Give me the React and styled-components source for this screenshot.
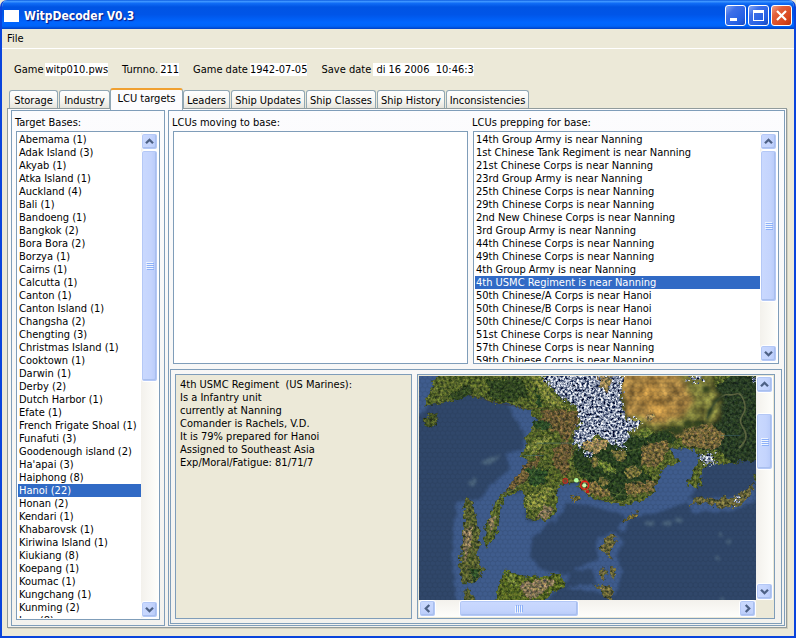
import React, { useState } from 'react';
import styled, { createGlobalStyle, css } from 'styled-components';

const GlobalStyle = createGlobalStyle`
  * { box-sizing: border-box; }
  body {
    margin: 0;
    background: #ece9d8;
    color: #000;
    font: 11px/13px "DejaVu Sans Condensed", Tahoma, sans-serif;
  }
  button, input { font: inherit; color: inherit; }
  button { padding: 0; cursor: default; }
`;

const line = '#7f9db9';

const Window = styled.div`
  height: 100vh;
  display: flex;
  flex-direction: column;
  background: #ece9d8;
  border: solid #0a44dc;
  border-width: 0 2px 2px;
  border-radius: 7px 7px 0 0;
  overflow: hidden;
`;

const TitleBar = styled.header`
  flex: none;
  height: 29px;
  display: flex;
  align-items: center;
  gap: 5px;
  padding: 2px 2px 0;
  background: linear-gradient(#0b5be0 0, #3d95ff 5%, #0f6bf5 12%, #0054e3 24%, #0055e8 50%, #0066ff 78%, #0064f8 90%, #0040c4 100%);
`;

const AppIcon = styled.span`
  width: 15px;
  height: 12px;
  background: #fff;
`;

const Title = styled.h1`
  flex: 1;
  margin: 0;
  color: #fff;
  font-size: 12px;
  line-height: 16px;
  text-shadow: 1px 1px 1px #0a1883;
`;

const CaptionButtons = styled.div`
  display: flex;
  gap: 2px;
`;

const CaptionButton = styled.button`
  display: grid;
  place-items: center;
  width: 21px;
  height: 21px;
  border: 1px solid #fff;
  border-radius: 3px;
  background: ${(p) => (p.$close
    ? 'linear-gradient(135deg, #f0a08a 0, #e2603c 30%, #d8451c 75%, #b83210 100%)'
    : 'linear-gradient(135deg, #86a8f4 0, #3e6fe8 30%, #2460e4 75%, #1a48b8 100%)')};
`;

const MenuBar = styled.nav`
  flex: none;
  height: 20px;
  display: flex;
  align-items: center;
  padding: 0 5px;
  border-bottom: 1px solid #fff;
`;

const MenuItem = styled.button`
  border: 0;
  background: none;
`;

const InfoBar = styled.section`
  flex: none;
  display: flex;
  gap: 14px;
  padding: 14px 12px 12px;
`;

const Field = styled.label`
  display: flex;
  gap: 2px;
  white-space: pre;
`;

const FieldValue = styled.input`
  field-sizing: content;
  height: 13px;
  padding: 0;
  border: 0;
  outline: 0;
  background: #fff;
`;

const Tabs = styled.div`
  flex: none;
  height: 20px;
  display: flex;
  align-items: flex-end;
  padding-left: 7px;
`;

const Tab = styled.button`
  width: ${(p) => p.$width}px;
  height: 18px;
  margin-right: 1px;
  padding-top: 2px;
  border: 1px solid #91a7b4;
  border-bottom: 0;
  border-radius: 3px 3px 0 0;
  background: linear-gradient(#fff, #f6f5f0 60%, #e6e4dc);
  white-space: nowrap;
  ${(p) => p.$active && css`
    height: 22px;
    margin: 0 0 -2px -1px;
    padding: 0 0 4px;
    border-top: 2px solid #f0a030;
    background: #fcfcfe;
    z-index: 1;
  `}
`;

const TabPanel = styled.main`
  flex: 1;
  min-height: 0;
  display: flex;
  gap: 3px;
  margin: 0 7px 8px 5px;
  padding: 1px 1px 1px 3px;
  border: 1px solid #919b9c;
  box-shadow: 1px 1px 0 #d3cfbf;
  background: linear-gradient(#fcfcfe, #f3f2ee);
`;

const BasesPane = styled.section`
  flex: none;
  width: 154px;
  display: flex;
  flex-direction: column;
  padding: 5px 4px;
  border: 1px solid ${line};
`;

const UnitsPane = styled.section`
  flex: 1;
  min-width: 0;
  display: grid;
  grid-template-rows: minmax(0, 250fr) minmax(0, 258fr);
  gap: 5px;
  padding: 5px 2px 1px 1px;
  border: 1px solid ${line};
`;

const UnitLists = styled.div`
  display: grid;
  grid-template-columns: minmax(0, 295fr) minmax(0, 306fr);
  gap: 5px;
  padding: 0 3px 0 3px;
`;

const ListColumn = styled.div`
  display: flex;
  flex-direction: column;
  min-height: 0;
`;

const ListTitle = styled.h2`
  flex: none;
  margin: 0 -1px 2px;
  font-size: 11px;
  line-height: 13px;
  font-weight: 400;
`;

const ListBox = styled.div`
  flex: 1;
  min-height: 0;
  display: flex;
  padding: 1px;
  border: 1px solid ${line};
  background: #fff;
`;

const Items = styled.ul`
  flex: 1;
  min-width: 0;
  margin: 0;
  padding: 0;
  list-style: none;
  overflow: hidden;
`;

const Item = styled.li`
  height: 13px;
  padding-left: 1px;
  white-space: nowrap;
  ${(p) => p.$selected && css`
    background: #316ac5;
    color: #fff;
  `}
`;

const Details = styled.div`
  display: grid;
  grid-template-columns: minmax(0, 237fr) minmax(0, 358fr);
  gap: 5px;
  padding: 4px 6px 4px 4px;
  border: 1px solid ${line};
`;

const UnitReport = styled.div`
  padding: 3px 4px;
  border: 1px solid ${line};
  background: #ece9d8;
  white-space: pre-wrap;
`;

const MapFrame = styled.div`
  display: grid;
  grid-template: minmax(0, 1fr) 17px / minmax(0, 1fr) 17px;
  min-height: 0;
  padding: 1px;
  border: 1px solid ${line};
  background: #ece9d8;
`;

const MapSvg = styled.svg`
  display: block;
  width: 100%;
  height: 100%;
`;

const Bar = styled.div`
  flex: none;
  display: flex;
  flex-direction: ${(p) => (p.$horizontal ? 'row' : 'column')};
  ${(p) => (p.$horizontal ? 'height' : 'width')}: 17px;
  background: linear-gradient(${(p) => (p.$horizontal ? '180deg' : '90deg')}, #f3f1ec, #fefefb);
`;

const raised = css`
  border: 1px solid #fff;
  border-radius: 3px;
  box-shadow: inset 0 0 0 1px #b4c8f6, inset -1px -1px 0 1px #a9bfee;
  background: linear-gradient(${(p) => (p.$horizontal ? '180deg' : '90deg')}, #cad9fe, #c4d4fd 60%, #b6c9f8);
`;

const BarButton = styled.button`
  ${raised}
  flex: none;
  display: grid;
  place-items: center;
  width: 17px;
  height: 17px;
`;

const Space = styled.span`
  flex: ${(p) => p.$part} 1 0;
`;

const Thumb = styled.span`
  ${raised}
  flex: ${(p) => p.$part} 1 0;
  display: grid;
  place-items: center;
`;

const turns = { up: 0, right: 90, down: 180, left: 270 };

function Arrow({ to }) {
  return (
    <svg width="9" height="9" viewBox="0 0 9 9" aria-hidden="true">
      <path d="M1 6.3 4.5 2.8 8 6.3" transform={`rotate(${turns[to]} 4.5 4.5)`} fill="none" stroke="#4d6185" strokeWidth="2.3" />
    </svg>
  );
}

function Grip({ horizontal }) {
  return (
    <svg width="8" height="8" viewBox="0 0 8 8" aria-hidden="true">
      <g transform={horizontal ? 'rotate(-90 4 4)' : undefined} shapeRendering="crispEdges">
        <path d="M0 .5h7M0 2.5h7M0 4.5h7M0 6.5h7" stroke="#eef4fe" />
        <path d="M1 1.5h7M1 3.5h7M1 5.5h7M1 7.5h7" stroke="#8cb0f8" />
      </g>
    </svg>
  );
}

function ScrollBar({ horizontal, before, size, after, label }) {
  return (
    <Bar $horizontal={horizontal}>
      <BarButton type="button" $horizontal={horizontal} aria-label={`${label}: back`}>
        <Arrow to={horizontal ? 'left' : 'up'} />
      </BarButton>
      <Space $part={before} />
      <Thumb $part={size} $horizontal={horizontal}><Grip horizontal={horizontal} /></Thumb>
      <Space $part={after} />
      <BarButton type="button" $horizontal={horizontal} aria-label={`${label}: forward`}>
        <Arrow to={horizontal ? 'right' : 'down'} />
      </BarButton>
    </Bar>
  );
}

function List({ id, title, items, initial, scroll }) {
  const [selected, setSelected] = useState(initial);
  return (
    <>
      <ListTitle id={id}>{title}</ListTitle>
      <ListBox>
        <Items role="listbox" aria-labelledby={id}>
          {items.map((item) => (
            <Item key={item} role="option" aria-selected={item === selected} $selected={item === selected} onClick={() => setSelected(item)}>
              {item}
            </Item>
          ))}
        </Items>
        {scroll && <ScrollBar label={title} {...scroll} />}
      </ListBox>
    </>
  );
}

const fields = [
  ['Game', 'witp010.pws'],
  ['Turnno.', '211'],
  ['Game date', '1942-07-05'],
  ['Save date', ' di 16 2006  10:46:3'],
];

const tabs = [
  ['Storage', 49], ['Industry', 51], ['LCU targets', 73], ['Leaders', 47],
  ['Ship Updates', 74], ['Ship Classes', 70], ['Ship History', 68], ['Inconsistencies', 83],
];

const bases = [
  'Abemama (1)', 'Adak Island (3)', 'Akyab (1)', 'Atka Island (1)', 'Auckland (4)', 'Bali (1)',
  'Bandoeng (1)', 'Bangkok (2)', 'Bora Bora (2)', 'Borzya (1)', 'Cairns (1)', 'Calcutta (1)',
  'Canton (1)', 'Canton Island (1)', 'Changsha (2)', 'Chengting (3)', 'Christmas Island (1)',
  'Cooktown (1)', 'Darwin (1)', 'Derby (2)', 'Dutch Harbor (1)', 'Efate (1)',
  'French Frigate Shoal (1)', 'Funafuti (3)', 'Goodenough island (2)', "Ha'apai (3)",
  'Haiphong (8)', 'Hanoi (22)', 'Honan (2)', 'Kendari (1)', 'Khabarovsk (1)',
  'Kiriwina Island (1)', 'Kiukiang (8)', 'Koepang (1)', 'Koumac (1)', 'Kungchang (1)',
  'Kunming (2)', 'Lae (8)',
];

const prepping = [
  '14th Group Army is near Nanning', '1st Chinese Tank Regiment is near Nanning',
  '21st Chinese Corps is near Nanning', '23rd Group Army is near Nanning',
  '25th Chinese Corps is near Nanning', '29th Chinese Corps is near Nanning',
  '2nd New Chinese Corps is near Nanning', '3rd Group Army is near Nanning',
  '44th Chinese Corps is near Nanning', '49th Chinese Corps is near Nanning',
  '4th Group Army is near Nanning', '4th USMC Regiment is near Nanning',
  '50th Chinese/A Corps is near Hanoi', '50th Chinese/B Corps is near Hanoi',
  '50th Chinese/C Corps is near Hanoi', '51st Chinese Corps is near Nanning',
  '57th Chinese Corps is near Nanning', '59th Chinese Corps is near Nanning',
];

const report = `4th USMC Regiment  (US Marines):
Is a Infantry unit
currently at Nanning
Comander is Rachels, V.D.
It is 79% prepared for Hanoi
Assigned to Southeast Asia
Exp/Moral/Fatigue: 81/71/7`;

function TheatreMap() {
  return (
    <MapSvg viewBox="27 24 1011 672" preserveAspectRatio="xMinYMin slice" role="img" aria-label="Theatre map">
      <defs>
        <pattern id="hex" width="15" height="26" patternUnits="userSpaceOnUse">
          <path d="M7.5 0v4.3L0 8.6v8.7l7.5 4.3V26M7.5 4.3l7.5 4.3M15 17.3l-7.5 4.3" fill="none" stroke="#101c28" strokeWidth="1.5" opacity=".28" />
        </pattern>
        <filter id="soft" x="-10%" y="-10%" width="120%" height="120%" colorInterpolationFilters="sRGB">
          <feTurbulence type="fractalNoise" baseFrequency=".04" numOctaves="2" seed="4" result="n" />
          <feDisplacementMap in="SourceGraphic" in2="n" scale="18" xChannelSelector="R" yChannelSelector="G" result="d" />
          <feGaussianBlur in="d" stdDeviation="4" />
        </filter>
        <filter id="land" x="-5%" y="-5%" width="110%" height="110%" colorInterpolationFilters="sRGB">
          <feTurbulence type="fractalNoise" baseFrequency=".06" numOctaves="3" seed="8" result="n" />
          <feDisplacementMap in="SourceGraphic" in2="n" scale="26" xChannelSelector="R" yChannelSelector="G" result="d" />
          <feGaussianBlur in="d" stdDeviation="2" result="s" />
          <feTurbulence type="fractalNoise" baseFrequency=".12" numOctaves="4" seed="21" />
          <feColorMatrix values="1.9 .2 0 0 -.55  1.5 .4 0 0 -.45  1.4 0 .5 0 -.45  0 0 0 0 1" result="t" />
          <feComposite in="s" in2="t" operator="arithmetic" k1="1" k2=".45" result="m" />
          <feComposite in="m" in2="s" operator="in" />
        </filter>
        <filter id="desert" x="-5%" y="-5%" width="110%" height="110%" colorInterpolationFilters="sRGB">
          <feTurbulence type="fractalNoise" baseFrequency=".035" numOctaves="3" seed="8" result="n" />
          <feDisplacementMap in="SourceGraphic" in2="n" scale="46" xChannelSelector="R" yChannelSelector="G" result="d" />
          <feGaussianBlur in="d" stdDeviation="8" result="s" />
          <feColorMatrix in="n" values="1 0 0 0 -.1  1 0 0 0 -.12  1 0 0 0 -.14  0 0 0 0 1" result="t" />
          <feComposite in="s" in2="t" operator="arithmetic" k1=".9" k2=".55" result="m" />
          <feComposite in="m" in2="s" operator="in" />
        </filter>
        <filter id="snow" x="-5%" y="-5%" width="110%" height="110%" colorInterpolationFilters="sRGB">
          <feTurbulence type="fractalNoise" baseFrequency=".09" numOctaves="2" seed="3" result="n" />
          <feDisplacementMap in="SourceGraphic" in2="n" scale="44" xChannelSelector="R" yChannelSelector="G" result="d" />
          <feTurbulence type="fractalNoise" baseFrequency=".14" numOctaves="3" seed="12" />
          <feColorMatrix values="2.3 .2 0 0 -.7  2.2 .2 0 0 -.61  1.9 .2 0 0 -.37  0 0 0 0 1" result="t" />
          <feComposite in="t" in2="d" operator="in" />
        </filter>
      </defs>

      <rect x="27" y="24" width="1011" height="672" fill="#30476a" />

      <g filter="url(#soft)" fill="#3f5c8d">
        <path d="M10 10H90L50 125 10 150Z" />
        <path d="M290 105 380 130 365 290 300 395 200 405 245 350 300 300 285 255 335 245 345 200Z" />
        <path d="M140 400 240 390 345 370 350 460 440 445 365 510 360 565 400 605 480 620 400 710H140L125 560Z" />
        <path d="M440 345 500 345 560 400 700 390 780 230 880 240 870 340 830 400 740 435 650 445 550 415 470 405 430 470Z" />
        <path d="M560 510 610 490 640 520 620 560 635 610 615 680 470 660 540 630 490 600 560 575Z" />
        <path d="M830 395 1000 380 1038 330V395L960 430 840 430Z" />
        <path d="M620 480 650 440 660 450 640 490Z" />
      </g>
      <path d="M500 606 545 600 562 648 485 652Z" fill="#30476a" filter="url(#soft)" />
      <g fill="#6c8896" opacity=".5" filter="url(#soft)">
        <path d="M210 285 240 265 270 262 245 285Z" />
        <path d="M175 345 195 325 200 335 185 355Z" />
        <path d="M705 460h25v12h-25zM757 460h28v12h-28zM795 448h18v10h-18z" />
        <path d="M945 520 960 505 955 530ZM925 490h12v12h-12zM917 565h12v12h-12zM932 684h12v12h-12z" />
      </g>

      <g filter="url(#land)">
        <path fill="#58682a" d="M85 10 42 112 110 105 175 80 240 100 350 122 378 152 345 220 330 268 355 285 325 350 270 380 248 420 222 480 226 540 262 490 272 420 285 388 340 365 347 450 405 462 440 430 447 350 500 345 530 382 580 400 640 414 700 397 735 370 755 300 808 285 778 242 830 240 870 256 850 300 825 350 865 360 880 300 900 288 960 288 1050 270V10Z" />
        <path fill="#4b5a26" d="M38 160 60 140 88 133 78 165 60 183 42 172Z" />
        <path fill="#5a6430" d="M161 390 180 385 195 425 207 500 203 570 222 605 205 636 165 648 148 620 150 560 162 480Z" />
        <path fill="#5a6430" d="M158 665 180 668 200 700H165Z" />
        <path fill="#5a6c24" d="M257 680 282 603 302 605 330 625 455 615 468 655 430 670 410 700H258Z" />
        <path fill="#746a34" d="M475 384 508 382 510 396 482 400Z" />
        <path fill="#746a34" d="M640 462 658 438 685 430 678 448 650 460Z" />
        <path fill="#6d6a3a" d="M833 420 850 388 920 388 985 385 1012 355 1033 342 1018 385 985 415 930 420 880 402 850 408Z" />
        <path fill="#4b5a26" d="M1025 330 1045 310V345Z" />
        <path fill="#6d6a3a" d="M570 540 582 508 600 498 622 506 603 535 598 560 615 580 590 570ZM568 600 590 600 585 635 565 625ZM600 590 618 600 612 635 598 615ZM545 648 570 650 608 655 602 692 575 690 575 662Z" />
      </g>

      <g filter="url(#land)">
        <path fill="#2b4025" d="M905 60 960 24H1050V275L960 285 930 250 865 240 830 200 880 150Z" />
        <path fill="#2c4422" d="M480 245 560 235 700 190 800 180 800 215 720 260 690 300 735 340 640 400 570 370 500 310Z" />
        <path fill="#344a22" d="M230 35 330 30 360 80 290 105 240 90ZM110 85 180 50 190 75 140 100Z" />
        <path fill="#705f36" d="M400 125 500 125 505 165 470 220 440 190 380 180ZM425 250 470 215 490 240 465 330 430 290ZM345 290 400 250 360 330 280 375Z" />
        <path fill="#7c6c3c" d="M700 230 770 215 780 240 735 300 690 290ZM780 190 900 165 945 200 920 240 830 235ZM500 330 560 345 620 395 520 375ZM640 345 740 340 730 370 650 385Z" />
        <path fill="#7d873a" d="M360 24H395L440 90 480 125 410 110ZM340 240 400 200 430 205 370 260ZM350 385 430 350 400 420 350 430Z" />
        <path fill="#6c8034" d="M560 275 605 290 620 320 580 310ZM655 185 710 165 735 195 690 210ZM275 610 300 608 330 660 305 655Z" />
        <path fill="#8b7c58" d="M330 645 400 630 440 640 380 690 340 685ZM165 480 190 480 180 560 155 590ZM235 450 258 440 245 500ZM400 410 435 420 405 455 380 450Z" />
        <path fill="#305028" d="M365 160 400 150 430 175 390 190ZM350 300 420 300 400 350 360 350ZM175 600 215 610 190 640ZM370 50 400 110 380 120Z" />
        <path fill="#76713a" d="M600 250 640 240 650 275 620 280ZM540 270 560 262 565 290 545 300ZM640 300 680 290 690 320 650 330ZM560 330 600 335 590 360Z" />
      </g>

      <g filter="url(#desert)">
        <path fill="#8e9143" d="M625 5H900L940 120 920 165 800 175 680 195 640 170Z" />
        <path fill="#b8924a" d="M635 5H800L850 100 830 140 760 170 700 150 635 150Z" />
        <path fill="#cfa04c" d="M660 60 740 40 760 110 800 135 740 150 700 110Z" />
      </g>
      <g fill="#33431f" filter="url(#soft)">
        <ellipse cx="888" cy="62" rx="13" ry="10" />
        <ellipse cx="830" cy="167" rx="12" ry="10" />
        <ellipse cx="861" cy="167" rx="14" ry="10" />
        <path d="M770 182 810 175 825 195 790 200Z" />
      </g>
      <path d="M890 150C900 110 935 75 955 80S985 60 1000 100 975 145 995 175 1005 220 985 240" fill="none" stroke="#6c7048" strokeWidth="5" opacity=".8" />
      <path d="M890 155C898 120 915 95 935 82" fill="none" stroke="#1e321c" strokeWidth="9" filter="url(#soft)" />

      <g filter="url(#snow)">
        <path d="M385 10H640L632 90 645 150 700 165 665 185 640 240 600 225 560 200 520 245 485 215 510 160 500 120 440 80Z" fill="#fff" />
        <path d="M515 250 550 248 550 265 515 262ZM870 262 905 255 915 285 880 290ZM830 18H880L870 40 835 38ZM1020 24 1050 20V55ZM960 395 1000 385 985 405Z" fill="#fff" />
      </g>
      <g filter="url(#land)">
        <path fill="#a08c58" d="M565 24H605L595 72 570 60ZM530 215 590 215 595 240 560 255 515 240ZM700 140 730 135 725 165Z" />
      </g>

      <g fill="none" stroke="#91a550" strokeWidth="2" opacity=".6">
        <path d="M485 245 480 300 540 320 590 370 625 380 690 380M625 380 640 360M600 395 630 375M650 250 690 240" />
        <path d="M380 300 350 340 300 370M400 210 370 240M260 400 250 480" />
      </g>
      <path d="M175 80 240 100 350 122 440 120 500 160 480 230" fill="none" stroke="#4c3a28" strokeWidth="2" opacity=".6" />
      <path d="M380 225H520M930 202H990M340 262H400" fill="none" stroke="#4d7a80" strokeWidth="2" opacity=".7" />

      <rect x="27" y="24" width="1011" height="672" fill="url(#hex)" />

      <circle cx="465" cy="338" r="7" fill="#6c4c30" stroke="#c82820" strokeWidth="3" />
      <circle cx="498" cy="336" r="7" fill="#b8ffa0" />
      <circle cx="523" cy="351" r="12" fill="none" stroke="#e81c14" strokeWidth="4" />
      <circle cx="522" cy="351" r="6" fill="#c8ffb4" />
      <path d="M527 366h9v8h-9z" fill="#c41c18" />
    </MapSvg>
  );
}

export default function App() {
  const [active, setActive] = useState('LCU targets');
  return (
    <>
      <GlobalStyle />
      <Window>
        <TitleBar>
          <AppIcon />
          <Title>WitpDecoder V0.3</Title>
          <CaptionButtons>
            <CaptionButton type="button" aria-label="Minimize">
              <svg width="17" height="17" viewBox="0 0 17 17"><path d="M3 11h7v3H3z" fill="#fff" /></svg>
            </CaptionButton>
            <CaptionButton type="button" aria-label="Maximize">
              <svg width="17" height="17" viewBox="0 0 17 17"><path d="M3 3h11v11H3zM4 6v7h9V6z" fill="#fff" fillRule="evenodd" /></svg>
            </CaptionButton>
            <CaptionButton type="button" $close aria-label="Close">
              <svg width="17" height="17" viewBox="0 0 17 17"><path d="m4 4 9 9m0-9-9 9" stroke="#fff" strokeWidth="2.2" /></svg>
            </CaptionButton>
          </CaptionButtons>
        </TitleBar>

        <MenuBar>
          <MenuItem type="button">File</MenuItem>
        </MenuBar>

        <InfoBar>
          {fields.map(([name, value]) => (
            <Field key={name}>
              {name}
              <FieldValue readOnly value={value} />
            </Field>
          ))}
        </InfoBar>

        <Tabs role="tablist">
          {tabs.map(([name, width]) => (
            <Tab key={name} type="button" role="tab" aria-selected={name === active} $active={name === active} $width={width} onClick={() => setActive(name)}>
              {name}
            </Tab>
          ))}
        </Tabs>

        <TabPanel role="tabpanel">
          <BasesPane>
            <List id="bases" title="Target Bases:" items={bases} initial="Hanoi (22)" scroll={{ before: 0, size: 232, after: 220 }} />
          </BasesPane>
          <UnitsPane>
            <UnitLists>
              <ListColumn>
                <List id="moving" title="LCUs moving to base:" items={[]} />
              </ListColumn>
              <ListColumn>
                <List id="prepping" title="LCUs prepping for base:" items={prepping} initial="4th USMC Regiment is near Nanning" scroll={{ before: 0, size: 151, after: 43 }} />
              </ListColumn>
            </UnitLists>
            <Details>
              <UnitReport>{report}</UnitReport>
              <MapFrame>
                <TheatreMap />
                <ScrollBar label="Map vertical" before={21} size={56} after={115} />
                <ScrollBar label="Map horizontal" horizontal before={23} size={119} after={161} />
              </MapFrame>
            </Details>
          </UnitsPane>
        </TabPanel>
      </Window>
    </>
  );
}
